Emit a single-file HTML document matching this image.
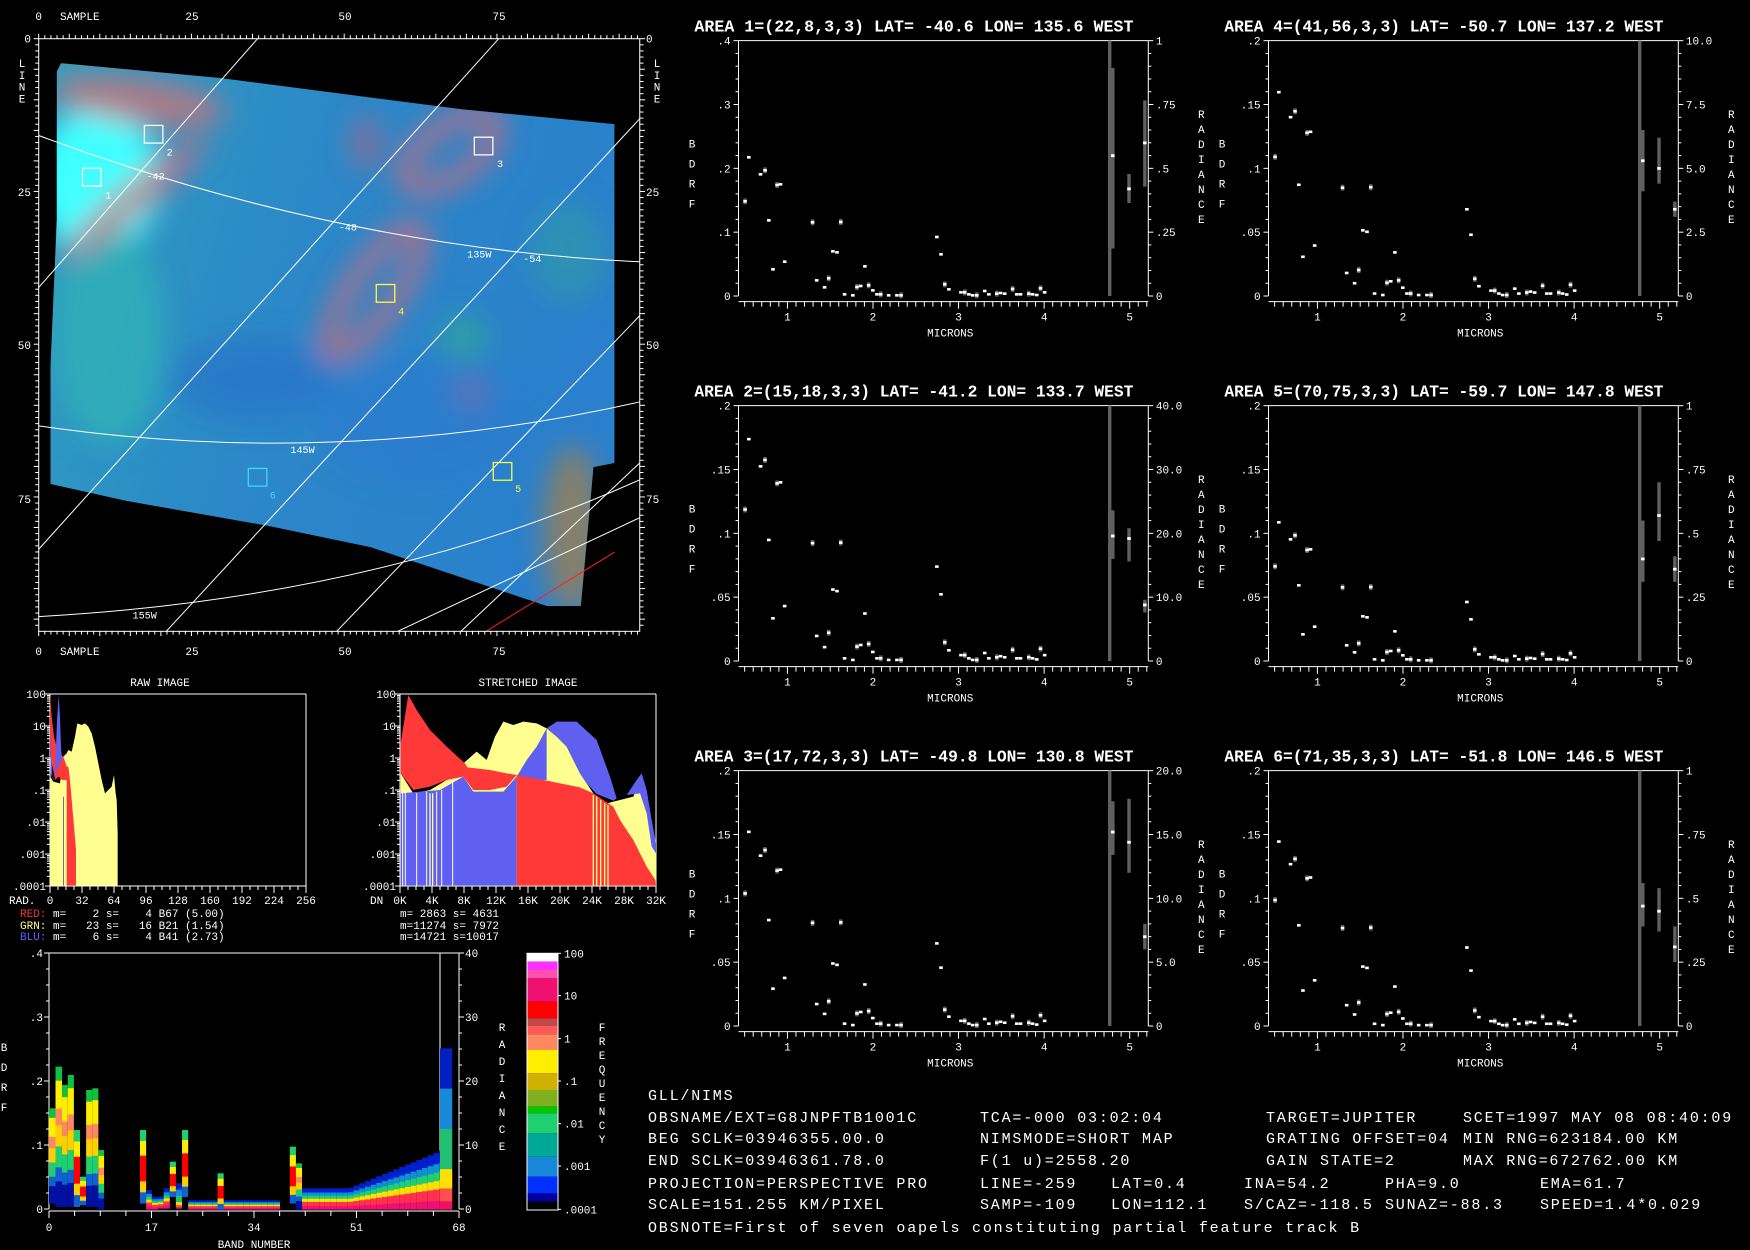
<!DOCTYPE html>
<html><head><meta charset="utf-8"><style>
html,body{margin:0;padding:0;background:#000;width:1750px;height:1250px;overflow:hidden}
svg{display:block}
text{font-family:"Liberation Mono",monospace;fill:#fff;white-space:pre}
</style></head><body>
<svg id="s" xmlns="http://www.w3.org/2000/svg" width="1750" height="1250" viewBox="0 0 1750 1250" xml:space="preserve">
<defs>
<clipPath id="blob"><polygon points="145,150 520,185 1100,260 1460,295 1460,1100 1410,1110 1380,1440 1300,1440 1150,1390 880,1300 640,1250 300,1190 120,1150 120,870 135,520 135,170"/></clipPath>
<filter id="bl" x="-20%" y="-20%" width="140%" height="140%"><feGaussianBlur stdDeviation="32"/></filter>
<linearGradient id="base" x1="0" y1="0" x2="1" y2="0.3"><stop offset="0" stop-color="#2fa0c0"/><stop offset="0.5" stop-color="#2c88c8"/><stop offset="1" stop-color="#2a80cc"/></linearGradient>
</defs>
<rect width="1750" height="1250" fill="#000"/>
<g transform="scale(0.42088)">
 <g clip-path="url(#blob)">
  <rect x="100" y="100" width="1400" height="1400" fill="url(#base)"/>
  <g filter="url(#bl)">
   <ellipse cx="230" cy="430" rx="150" ry="170" fill="#40ffff"/>
   <ellipse cx="260" cy="800" rx="130" ry="260" fill="#30b0b8" opacity="0.8"/>
   <ellipse cx="330" cy="240" rx="210" ry="55" transform="rotate(8 330 240)" fill="#e07070" opacity="0.7"/>
   <ellipse cx="320" cy="470" rx="220" ry="38" transform="rotate(-40 320 470)" fill="#e06878" opacity="0.7"/>
   <ellipse cx="1070" cy="360" rx="125" ry="60" transform="rotate(-35 1070 360)" fill="none" stroke="#e86870" stroke-width="38" opacity="0.8"/>
   <ellipse cx="890" cy="690" rx="175" ry="55" transform="rotate(-55 890 690)" fill="none" stroke="#e86870" stroke-width="38" opacity="0.8"/>
   <ellipse cx="870" cy="340" rx="35" ry="65" fill="#c06080" opacity="0.6"/>
   <ellipse cx="1360" cy="1260" rx="70" ry="200" fill="#908060" opacity="0.9"/>
   <ellipse cx="1100" cy="800" rx="60" ry="50" fill="#30b090" opacity="0.6"/>
   <ellipse cx="1350" cy="600" rx="90" ry="120" fill="#30a0a0" opacity="0.5"/>
   <ellipse cx="600" cy="900" rx="200" ry="100" fill="#2870c8" opacity="0.6"/>
   <ellipse cx="1000" cy="1000" rx="250" ry="150" fill="#2a78d0" opacity="0.5"/>
   <ellipse cx="1120" cy="930" rx="30" ry="40" fill="#c06070" opacity="0.4"/>
  </g>
 </g>
 <g stroke="#fff" stroke-width="2.4" fill="none">
  <line x1="612" y1="92" x2="92" y2="683"/>
  <line x1="1185" y1="92" x2="92" y2="1305"/>
  <line x1="1520" y1="282" x2="395" y2="1500"/>
  <line x1="1520" y1="750" x2="800" y2="1500"/>
  <line x1="1520" y1="1100" x2="1095" y2="1500"/>
  <line x1="1520" y1="1230" x2="945" y2="1500"/>
  <path d="M92,322 Q806,588 1520,622"/>
  <path d="M92,1012 Q806,1116 1520,955"/>
  <path d="M92,1465 Q900,1420 1520,1140"/>
 </g>
 <line x1="1155" y1="1500" x2="1460" y2="1312" stroke="#ff2020" stroke-width="2.4"/>
 <g fill="none" stroke-width="3">
  <rect x="196" y="400" width="44" height="42" stroke="#fff"/>
  <rect x="343" y="298" width="44" height="42" stroke="#fff"/>
  <rect x="1127" y="326" width="44" height="42" stroke="#fff"/>
  <rect x="894" y="676" width="44" height="42" stroke="#ffff40"/>
  <rect x="1172" y="1099" width="44" height="42" stroke="#ffff40"/>
  <rect x="590" y="1113" width="44" height="42" stroke="#40d8ff"/>
 </g>
 <g font-size="24">
  <text x="250" y="472">1</text><text x="396" y="370">2</text><text x="1181" y="397">3</text>
  <text x="946" y="747" style="fill:#ffff40">4</text><text x="1224" y="1169" style="fill:#ffff40">5</text><text x="641" y="1184" style="fill:#40d8ff">6</text>
  <text x="348" y="427">-42</text><text x="805" y="548">-48</text><text x="1110" y="612">135W</text><text x="1243" y="622">-54</text>
  <text x="690" y="1076">145W</text><text x="315" y="1470">155W</text>
 </g>
 <rect x="92" y="92" width="1428" height="1408" fill="none" stroke="#fff" stroke-width="2.4"/>
</g>
<g id="dyn"></g>
<g transform="translate(0,670) scale(0.33333)">
 <polygon fill="#ffff90" points="150,647 150,320 160,335 180,340 190,260 200,250 205,240 215,245 225,200 232,160 245,165 255,160 265,170 275,190 285,230 295,280 305,330 315,370 325,360 335,350 342,315 347,370 350,390 353,490 353,647"/>
 <polygon fill="#ff3838" points="150,72 155,140 162,200 170,230 182,250 192,265 200,290 205,290 210,330 216,400 222,470 228,540 228,647 200,647 200,330 186,330 176,320 166,330 157,290 150,260"/>
 <polygon fill="#6060f0" points="150,160 154,250 157,320 162,330 167,260 171,150 176,75 180,140 183,230 186,270 178,282 170,300 160,330 152,310"/>
 <rect x="189" y="380" width="3" height="267" fill="#7070a0"/>
</g>
<g transform="translate(380,680) scale(0.33333)">
 <polygon fill="#ffff90" points="62,617 62,280 100,340 150,330 200,300 250,250 290,215 320,240 345,170 370,125 400,135 430,125 470,130 500,145 530,170 560,200 580,240 600,280 640,340 680,370 760,350 780,300 795,380 810,430 828,500 828,617"/>
 <polygon fill="#6060f0" points="62,617 62,340 120,335 180,330 250,290 280,335 370,335 410,290 440,240 470,200 500,145 500,300 410,300 410,617"/>
 <polygon fill="#6060f0" points="500,145 530,125 590,125 650,180 690,290 710,355 700,362 650,342 620,310 600,280 580,240 560,200 530,170"/>
 <polygon fill="#6060f0" points="740,345 770,300 785,280 800,330 815,420 828,490 828,520 815,500 800,400 780,340"/>
 <polygon fill="#ff3838" points="62,190 85,45 110,90 150,150 200,200 255,250 262,262 330,270 380,280 410,285 380,320 330,330 280,330 250,290 200,300 150,320 100,330 62,280"/>
 <polygon fill="#ff3838" points="410,617 410,285 500,302 600,322 640,340 700,380 720,420 760,480 800,560 826,600 828,617"/>
 <g stroke="#ffffff" stroke-width="3">
  <line x1="68" y1="330" x2="68" y2="617"/><line x1="76" y1="330" x2="76" y2="617"/><line x1="110" y1="340" x2="110" y2="617"/><line x1="140" y1="335" x2="140" y2="617"/><line x1="170" y1="335" x2="170" y2="617"/><line x1="185" y1="330" x2="185" y2="617"/><line x1="218" y1="300" x2="218" y2="617"/>
 </g>
 <g stroke="#ffff90" stroke-width="4">
  <line x1="150" y1="340" x2="150" y2="617"/><line x1="158" y1="340" x2="158" y2="617"/><line x1="640" y1="345" x2="640" y2="617"/><line x1="650" y1="350" x2="650" y2="617"/><line x1="662" y1="360" x2="662" y2="617"/><line x1="674" y1="370" x2="674" y2="617"/><line x1="684" y1="375" x2="684" y2="617"/>
 </g>
</g>
<g font-size="11">
 <text x="160" y="686" text-anchor="middle">RAW IMAGE</text>
 <text x="528" y="686" text-anchor="middle">STRETCHED IMAGE</text>
 <text x="20" y="917"><tspan style="fill:#ff3030">RED:</tspan> m=    2 s=    4 B67 (5.00)</text>
 <text x="20" y="929"><tspan style="fill:#ffff80">GRN:</tspan> m=   23 s=   16 B21 (1.54)</text>
 <text x="20" y="940"><tspan style="fill:#6060ff">BLU:</tspan> m=    6 s=    4 B41 (2.73)</text>
 <text x="400" y="917">m= 2863 s= 4631</text>
 <text x="400" y="929">m=11274 s= 7972</text>
 <text x="400" y="940">m=14721 s=10017</text>
 <text x="9" y="904">RAD.</text>
 <text x="370" y="904">DN</text>
</g>
<g font-size="15" style="letter-spacing:1.8px">
 <text x="648" y="1100">GLL/NIMS</text>
 <text x="648" y="1122">OBSNAME/EXT=G8JNPFTB1001C</text><text x="980" y="1122">TCA=-000 03:02:04</text><text x="1266" y="1122">TARGET=JUPITER</text><text x="1463" y="1122">SCET=1997 MAY 08 08:40:09</text>
 <text x="648" y="1143">BEG SCLK=03946355.00.0</text><text x="980" y="1143">NIMSMODE=SHORT MAP</text><text x="1266" y="1143">GRATING OFFSET=04</text><text x="1463" y="1143">MIN RNG=623184.00 KM</text>
 <text x="648" y="1165">END SCLK=03946361.78.0</text><text x="980" y="1165">F(1 u)=2558.20</text><text x="1266" y="1165">GAIN STATE=2</text><text x="1463" y="1165">MAX RNG=672762.00 KM</text>
 <text x="648" y="1188">PROJECTION=PERSPECTIVE PRO</text><text x="980" y="1188">LINE=-259</text><text x="1111" y="1188">LAT=0.4</text><text x="1244" y="1188">INA=54.2</text><text x="1385" y="1188">PHA=9.0</text><text x="1540" y="1188">EMA=61.7</text>
 <text x="648" y="1209">SCALE=151.255 KM/PIXEL</text><text x="980" y="1209">SAMP=-109</text><text x="1111" y="1209">LON=112.1</text><text x="1244" y="1209">S/CAZ=-118.5</text><text x="1385" y="1209">SUNAZ=-88.3</text><text x="1540" y="1209">SPEED=1.4*0.029</text>
 <text x="648" y="1232">OBSNOTE=First of seven oapels constituting partial feature track B</text>
</g>
</svg>
<script>
(function(){
var NS='http://www.w3.org/2000/svg',G=document.getElementById('dyn');
function el(t,a,txt){var e=document.createElementNS(NS,t);for(var k in a)e.setAttribute(k,a[k]);if(txt!=null)e.textContent=txt;G.appendChild(e);return e;}
function L(x1,y1,x2,y2,c,w){el('line',{x1:x1,y1:y1,x2:x2,y2:y2,stroke:c||'#fff','stroke-width':w||1});}
function T(x,y,s,o){var a={x:x,y:y,'font-size':(o&&o.fs)||11};if(o&&o.anchor)a['text-anchor']=o.anchor;if(o&&o.fill)a.style='fill:'+o.fill;if(o&&o.bold)a['font-weight']='bold';if(o&&o.tl){a.textLength=o.tl;a.lengthAdjust='spacingAndGlyphs';}el('text',a,s);}
function R(x,y,w,h,c){el('rect',{x:x,y:y,width:w,height:h,fill:c});}
var f0=38.7,f1=640,fy1=631;
for(var i=0;i<=98;i++){var x=f0+i*6.11;if(x>f1)break;var l=(i%5==0)?5:3.5;L(x,f0,x,f0-l);L(x,fy1,x,fy1+l);}
for(var i=0;i<=97;i++){var y=f0+i*6.11;if(y>fy1)break;var l=(i%5==0)?5:3.5;L(f0,y,f0-l,y);L(f1,y,f1+l,y);}
[[0,38.7],[25,192],[50,345],[75,499]].forEach(function(p){T(p[1],20,String(p[0]),{anchor:'middle'});T(p[1],655,String(p[0]),{anchor:'middle'});T(31,p[1]+4,String(p[0]),{anchor:'end'});T(646,p[1]+4,String(p[0]));});
T(60,20,'SAMPLE');T(60,655,'SAMPLE');
'LINE'.split('').forEach(function(c,i){T(22,67+i*11.8,c,{anchor:'middle'});T(657,67+i*11.8,c,{anchor:'middle'});});
var P1=[[247,604],[258,472],[292,523],[305,511],[316,661],[328,808],[340,555],[350,553],[362,785],[443,667],[455,841],[478,862],[490,835],[502,754],[514,757],[525,666],[536,883],[560,886],[572,861],[583,858],[595,799],[606,856],[618,871],[630,883],[641,883],[664,886],[688,886],[700,886],[804,711],[816,763],[827,853],[839,868],[874,877],[885,877],[897,883],[908,886],[920,886],[943,873],[955,883],[978,881],[989,879],[1001,881],[1024,867],[1036,883],[1047,883],[1071,881],[1082,883],[1094,885],[1105,865],[1117,877]];
var panels=[
 {dx:0,dy:0,t:'AREA 1=(22,8,3,3) LAT= -40.6 LON= 135.6 WEST',l:['.4','.3','.2','.1','0'],r:['1','.75','.5','.25','0'],k:1,b:[[1315,.893,.186,.55],[1362,.478,.364,.42],[1408,.766,.428,.6]]},
 {dx:0,dy:365,t:'AREA 2=(15,18,3,3) LAT= -41.2 LON= 133.7 WEST',l:['.2','.15','.1','.05','0'],r:['40.0','30.0','20.0','10.0','0'],k:1.6,b:[[1315,.59,.40,.49],[1362,.52,.39,.48],[1408,.24,.19,.22]]},
 {dx:0,dy:730,t:'AREA 3=(17,72,3,3) LAT= -49.8 LON= 130.8 WEST',l:['.2','.15','.1','.05','0'],r:['20.0','15.0','10.0','5.0','0'],k:1.4,b:[[1315,.88,.67,.76],[1362,.89,.60,.72],[1408,.40,.30,.35]]},
 {dx:530,dy:0,t:'AREA 4=(41,56,3,3) LAT= -50.7 LON= 137.2 WEST',l:['.2','.15','.1','.05','0'],r:['10.0','7.5','5.0','2.5','0'],k:1.47,b:[[1315,.65,.41,.53],[1362,.62,.44,.5],[1408,.37,.31,.34]]},
 {dx:530,dy:365,t:'AREA 5=(70,75,3,3) LAT= -59.7 LON= 147.8 WEST',l:['.2','.15','.1','.05','0'],r:['1','.75','.5','.25','0'],k:1.0,b:[[1315,.55,.31,.40],[1362,.70,.47,.57],[1408,.41,.31,.36]]},
 {dx:530,dy:730,t:'AREA 6=(71,35,3,3) LAT= -51.8 LON= 146.5 WEST',l:['.2','.15','.1','.05','0'],r:['1','.75','.5','.25','0'],k:1.33,b:[[1315,.56,.39,.47],[1362,.54,.37,.45],[1408,.39,.25,.31]]}
];
panels.forEach(function(p){
 function X(z){return 660+p.dx+z/2.904;} function Y(z){return p.dy+z/3;}
 T(X(100),Y(95),p.t,{fs:16.5,bold:1,tl:439});
 L(X(228),Y(122),X(1418),Y(122));L(X(228),Y(122),X(228),Y(888));L(X(1418),Y(122),X(1418),Y(888));
 for(var i=0;i<=20;i++){var y=Y(122+i*38.3);var m=i%5==0;L(X(228),y,X(228)-(m?5:3),y);L(X(1418),y,X(1418)+(m?5:3),y);}
 for(var i=0;i<5;i++){var y=Y(122+i*191.5)+4;T(X(205),y,p.l[i],{anchor:'end'});T(X(1440),y,p.r[i]);}
 L(X(228),Y(905),X(1418),Y(905));
 for(var j=-5;j<=42;j++){var zx=370+j*24.85;if(zx<228||zx>1418)continue;var m=j%10==0;L(X(zx),Y(905),X(zx),Y(905)+(m?7:5));}
 for(var m=1;m<=5;m++)T(X(370+(m-1)*248.5),Y(962),String(m),{anchor:'middle'});
 T(X(843),Y(1010),'MICRONS',{anchor:'middle'});
 'BDRF'.split('').forEach(function(c,i){T(X(93),Y(442+i*60),c,{anchor:'middle'});});
 'RADIANCE'.split('').forEach(function(c,i){T(X(1418)+53,p.dy+118+i*15,c,{anchor:'middle'});});
 R(X(1306)-1.7,Y(122),3.4,Y(888)-Y(122),'#606060');
 p.b.forEach(function(b){var yt=Y(888-b[1]*766),yb=Y(888-b[2]*766);R(X(b[0])-1.7,yt,3.4,yb-yt,'#606060');R(X(b[0])-1.8,Y(888-b[3]*766)-1.3,3.6,2.8,'#fff');});
 P1.forEach(function(q,i){var fr=Math.min(0.97,(888-q[1])/766*p.k);var y=Y(888-fr*766);if(i%3==0)R(X(q[0])-1.7,y-3,3.4,6,'#606060');R(X(q[0])-1.8,y-1.3,3.6,2.6,'#fff');});
});
function hist(x0,x1,labs){
 var y0=694,y1=886,d=(y1-y0)/6;
 L(x0,y0,x1,y0);L(x1,y0,x1,y1);L(x0,y0,x0,y1);L(x0,y1,x1,y1);
 var yl=['100','10','1','.1','.01','.001','.0001'];
 for(var i=0;i<7;i++){var y=y0+i*d;L(x0-5,y,x0,y);T(x0-4,y+4,yl[i],{anchor:'end'});
  if(i<6)for(var j=2;j<=9;j++){var yy=y0+(i+1)*d-Math.log10(j)*d;L(x0-3,yy,x0,yy);}}
 for(var i=0;i<=32;i++){var x=x0+i*(x1-x0)/32;L(x,y1,x,y1+(i%4==0?7:4));}
 for(var i=0;i<9;i++)T(x0+i*(x1-x0)/8,904,labs[i],{anchor:'middle'});
}
hist(50,306,['0','32','64','96','128','160','192','224','256']);
hist(400,656,['0K','4K','8K','12K','16K','20K','24K','28K','32K']);
var bx0=49,bx1=459,by0=953,by1=1209;
L(bx0,by0,bx1,by0);L(bx0,by0,bx0,by1);L(bx1,by0,bx1,by1);L(440,by0,440,by1);
for(var i=0;i<=16;i++){var y=by0+i*(by1-by0)/16;var m=i%4==0;L(bx0,y,bx0-(m?5:3),y);L(bx1,y,bx1+(m?5:3),y);}
var ll=['.4','.3','.2','.1','0'],rl=['40','30','20','10','0'];
for(var i=0;i<5;i++){var y=by0+i*64+4;T(43,y,ll[i],{anchor:'end'});T(465,y,rl[i]);}
L(bx0,by1+2,bx1,by1+2);
for(var i=0;i<=16;i++){var x=bx0+i*(bx1-bx0)/16;L(x,by1+2,x,by1+(i%4==0?9:7));}
[['0',49],['17',151.5],['34',254],['51',356.5],['68',459]].forEach(function(a){T(a[1],1231,a[0],{anchor:'middle'});});
T(254,1248,'BAND NUMBER',{anchor:'middle'});
'BDRF'.split('').forEach(function(c,i){T(4,1051+i*20,c,{anchor:'middle'});});
'RADIANCE'.split('').forEach(function(c,i){T(502,1031+i*17,c,{anchor:'middle'});});
'FREQUENCY'.split('').forEach(function(c,i){T(602,1031+i*14,c,{anchor:'middle'});});
var cb=[[40,65,'#ffffff'],[65,90,'#ff30ff'],[90,115,'#ff50b0'],[115,185,'#f01070'],[185,235,'#ff0000'],[235,258,'#c04848'],[258,283,'#ff5858'],[283,330,'#ff8860'],[330,400,'#ffee00'],[400,450,'#d0b000'],[450,500,'#80b020'],[500,520,'#00c800'],[520,580,'#20d070'],[580,650,'#00a898'],[650,710,'#1888d8'],[710,760,'#0030ff'],[760,785,'#0000a0'],[785,810,'#000000']];
cb.forEach(function(c){R(527,940+c[0]/3,31,(c[1]-c[0])/3,c[2]);});
el('rect',{x:527,y:953.3,width:31,height:256.7,fill:'none',stroke:'#fff','stroke-width':1});
[['100',40],['10',167],['1',296],['.1',423],['.01',551],['.001',678],['.0001',808]].forEach(function(a){var y=940+a[1]/3;L(558,y,561,y);T(564,y+4,a[0]);});
function cx(z){return z/2.45;} function cy(z){return 940+z/3;}
var PA=[['#10c040',.1],['#ffee00',.2],['#ff8860',.12],['#ffd000',.15],['#20d070',.15],['#1060d0',.1],['#0010a0',.18]];
var PB=[['#0020d0',.2],['#1090d0',.15],['#20d070',.15],['#ffe000',.15],['#ff3050',.2],['#f01070',.15]];
var PC=[['#0020c0',.25],['#1888d8',.25],['#20c070',.25],['#ffe000',.12],['#ff5050',.08],['#f01060',.05]];
var PR=[['#20d070',.15],['#ffee00',.2],['#ff0000',.35],['#ffd000',.15],['#1060d0',.15]];
function col(a,b,t,bt,P){var x=cx(a),w=cx(b)-cx(a),y=cy(t),H=cy(bt)-cy(t);P.forEach(function(s){var h=s[1]*H;R(x,y,w,h+0.3,s[0]);y+=h;});}
col(120,136,505,790,PA);col(136,152,380,800,PA);col(152,166,435,800,PA);col(166,181,405,800,PA);col(181,196,570,800,PR);col(196,211,710,795,PR);col(211,226,450,800,PA);col(226,241,445,800,PA);col(241,255,630,808,PA);
col(343,358,570,790,PR);col(358,372,750,808,PB);col(372,387,770,808,PB);col(387,401,770,805,PB);col(401,416,745,805,PB);col(416,431,665,770,PR);col(431,446,730,805,PC);col(446,461,570,770,PR);
for(var z=461;z<680;z+=15)col(z,z+15,775+(z%3)*3,808,PB);
col(533,548,700,808,PR);col(710,725,620,790,PR);col(725,740,670,808,PA);
for(var z=740;z<1078;z+=14){var t=745-Math.max(0,(z-850))*0.5;col(z,z+14,t,808,PB);}
col(1078,1108,325,808,PC);
})();
</script>
</body></html>
